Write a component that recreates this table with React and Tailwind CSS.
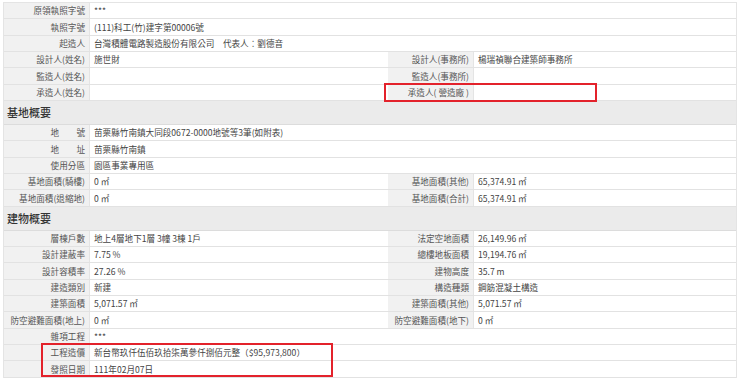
const font = { fontFamily: '"Noto Sans CJK TC", "Noto Sans", sans-serif' };

const top = [
  ["原領執照字號", "***"],
  ["執照字號", "(111)科工(竹)建字第00006號"],
  ["起造人", "台灣積體電路製造股份有限公司\u3000代表人：劉德音"],
  ["設計人(姓名)", "施世財", "設計人(事務所)", "楊瑞禎聯合建築師事務所"],
  ["監造人(姓名)", "", "監造人(事務所)", ""],
  ["承造人(姓名)", "", "承造人( 營造廠 )", ""],
];

const site = [
  ["地\u3000\u3000號", "苗栗縣竹南鎮大同段0672-0000地號等3筆(如附表)"],
  ["地\u3000\u3000址", "苗栗縣竹南鎮"],
  ["使用分區", "園區事業專用區"],
  ["基地面積(騎樓)", "0 ㎡", "基地面積(其他)", "65,374.91 ㎡"],
  ["基地面積(退縮地)", "0 ㎡", "基地面積(合計)", "65,374.91 ㎡"],
];

const bldg = [
  ["層棟戶數", "地上4層地下1層 3幢 3棟 1戶", "法定空地面積", "26,149.96 ㎡"],
  ["設計建蔽率", "7.75 %", "總樓地板面積", "19,194.76 ㎡"],
  ["設計容積率", "27.26 %", "建物高度", "35.7 m"],
  ["建造類別", "新建", "構造種類", "鋼筋混凝土構造"],
  ["建築面積", "5,071.57 ㎡", "建築面積(其他)", "5,071.57 ㎡"],
  ["防空避難面積(地上)", "0 ㎡", "防空避難面積(地下)", "0 ㎡"],
  ["雜項工程", "***"],
  ["工程造價", "新台幣玖仟伍佰玖拾柒萬參仟捌佰元整（$95,973,800）"],
  ["發照日期", "111年02月07日"],
];

const Label = ({ children }) => (
  <div className="bg-[#f1f1f1] text-[#555] text-right pr-[4px] whitespace-nowrap border-r border-[#e4e4e4] flex items-center justify-end">
    {children}
  </div>
);

const Row = ({ r }) => (
  <div className="grid grid-cols-[86px_298px_86px_264px] h-[16.33px] border-b border-[#e2e2e2] text-[8.6px] leading-none">
    <Label>{r[0]}</Label>
    {r.length === 2 ? (
      <div className="col-span-3 pl-[4px] text-[#444] flex items-center whitespace-nowrap">{r[1]}</div>
    ) : (
      <>
        <div className="pl-[4px] text-[#444] flex items-center whitespace-nowrap">{r[1]}</div>
        <Label>{r[2]}</Label>
        <div className="pl-[4px] text-[#444] flex items-center whitespace-nowrap">{r[3]}</div>
      </>
    )}
  </div>
);

const Header = ({ title }) => (
  <div className="h-[24px] bg-[#ebebeb] border-b border-[#dcdcdc] flex items-center pl-[3px] text-[11px] text-[#333] font-medium">
    {title}
  </div>
);

export default function App() {
  return (
    <div className="relative w-[740px] h-[381px] bg-white overflow-hidden pt-[2px] pl-[3px]" style={font}>
      <div className="w-[734px] border-x border-t border-[#e4e4e4]">
        {top.map((r, i) => <Row key={i} r={r} />)}
        <Header title="基地概要" />
        {site.map((r, i) => <Row key={i} r={r} />)}
        <Header title="建物概要" />
        {bldg.map((r, i) => <Row key={i} r={r} />)}
      </div>
      <div className="absolute left-[384px] top-[83px] w-[213px] h-[19px] border-2 border-[#e3222b]"></div>
      <div className="absolute left-[41px] top-[343px] w-[292px] h-[34px] border-2 border-[#e3222b]"></div>
    </div>
  );
}
